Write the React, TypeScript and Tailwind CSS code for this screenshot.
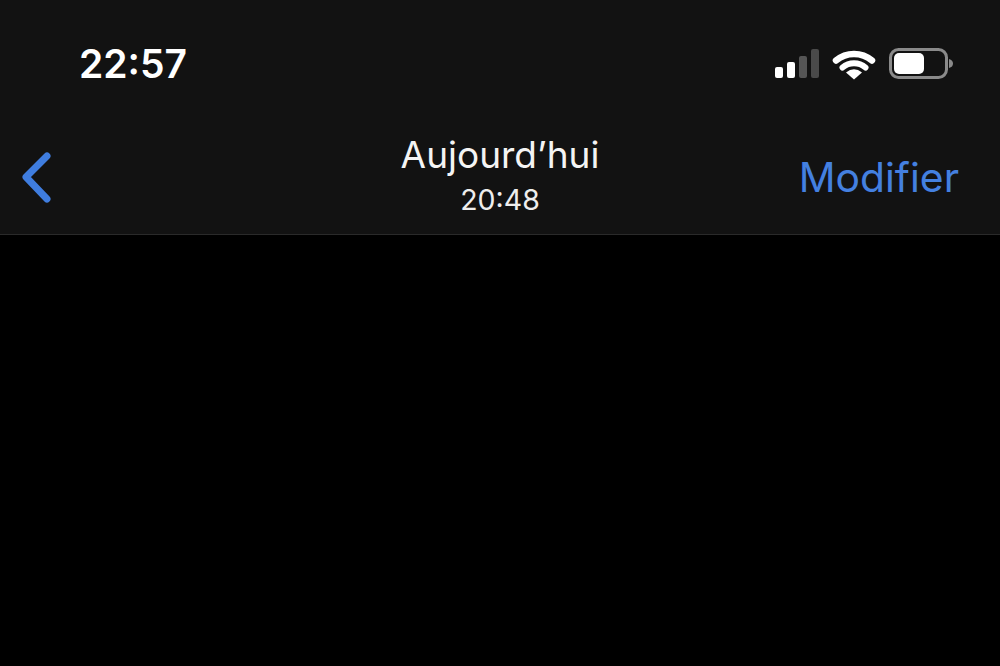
export default function App() {
  return (
    <div className="w-[1000px] h-[666px] bg-black overflow-hidden flex flex-col font-['Inter',sans-serif]">
      <header className="h-[235px] bg-[#121212] border-b border-[#2a2a2a] flex flex-col">
        <div className="flex items-center justify-between pt-[40px] h-[88px] pl-[79px] pr-[47px]">
          <span className="text-[39px] leading-[48px] font-semibold text-white">22:57</span>
          <div className="flex items-center">
            <svg width="178" height="32" viewBox="0 0 178 32">
              <rect x="0" y="19" width="8" height="11" rx="2" fill="#fff" />
              <rect x="12" y="14" width="8" height="16" rx="2" fill="#fff" />
              <rect x="24" y="8" width="8" height="22" rx="2" fill="#555" />
              <rect x="36" y="1" width="8" height="29" rx="2" fill="#4a4a4a" />
              <path d="M61 12.5 A28 28 0 0 1 97 12.5" fill="none" stroke="#fff" strokeWidth="6.5" strokeLinecap="round" />
              <path d="M67.5 19.5 A18 18 0 0 1 90.5 19.5" fill="none" stroke="#fff" strokeWidth="6" strokeLinecap="round" />
              <path d="M71 24.5 Q79 18 87 24.5 L79 31.5 Z" fill="#fff" />
              <rect x="115.5" y="1.5" width="56" height="28" rx="8" fill="none" stroke="#8a8a8a" strokeWidth="3" />
              <rect x="119" y="5" width="30" height="21" rx="5" fill="#fff" />
              <path d="M174 11 Q178 12 178 15.5 Q178 19 174 20 Z" fill="#8a8a8a" />
            </svg>
          </div>
        </div>
        <div className="grid grid-cols-3 items-center flex-1 pt-[34px] px-[41px]">
          <svg width="34" height="52" viewBox="0 0 34 52" className="mt-[-2px] ml-[-21px]">
            <path d="M27 5 L6 26 L27 48" fill="none" stroke="#3f7ddf" strokeWidth="7" strokeLinecap="round" strokeLinejoin="round" />
          </svg>
          <div className="flex flex-col items-center gap-[5px] text-[#f4f4f4] mt-[-8px]">
            <span className="text-[37px] leading-[46px]">Aujourd’hui</span>
            <span className="text-[28.5px] leading-[34px] text-[#eeeeee]">20:48</span>
          </div>
          <span className="text-right text-[40.8px] leading-[48px] text-[#4480e0] mt-[-2px]">Modifier</span>
        </div>
      </header>
      <main className="flex-1 bg-black" />
    </div>
  );
}
